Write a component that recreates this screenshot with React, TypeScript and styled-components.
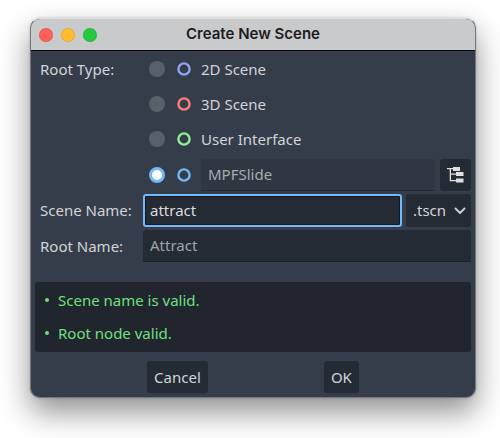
import React, { useState } from "react";
import styled, { createGlobalStyle } from "styled-components";

const GlobalStyle = createGlobalStyle`
  *, *::before, *::after { box-sizing: border-box; }
  body {
    margin: 0;
    background: #ffffff;
    font-family: "Noto Sans", sans-serif;
    font-size: 15px;
    line-height: 24px;
    color: #d2d4d7;
  }
  button, input, select { font: inherit; color: inherit; margin: 0; }
`;

const Desktop = styled.div`
  padding: 18px 24px 40px 30px;
  overflow: hidden;
`;

const Dialog = styled.main`
  border-radius: 10px;
  overflow: hidden;
  background: #363d4a;
  border: 1px solid #727781;
  border-top-color: #dededf;
  box-shadow: 0 14px 30px rgba(0, 0, 0, 0.44), 0 0 3px rgba(0, 0, 0, 0.18);
`;

const TitleBar = styled.header`
  display: grid;
  grid-template-columns: 1fr auto 1fr;
  align-items: center;
  height: 32px;
  padding: 0 8px;
  background: #c9cacc;
  border-bottom: 1px solid #08090b;
`;

const Lights = styled.div`
  display: flex;
  gap: 8px;
`;

const Light = styled.button<{ $color: string }>`
  width: 14px;
  height: 14px;
  padding: 0;
  border: 1px solid rgba(0, 0, 0, 0.08);
  border-radius: 50%;
  background: ${(p) => p.$color};
`;

const Title = styled.h1`
  margin: 0;
  padding-bottom: 2px;
  font: 600 15px/24px Inter, sans-serif;
  color: #1d1d1f;
`;

const Body = styled.form`
  padding: 3px 4px 4px;
`;

const Fields = styled.div`
  display: grid;
  grid-template-columns: 105px minmax(0, 1fr);
  column-gap: 3px;
  row-gap: 3px;
`;

const FieldLabel = styled.label`
  padding-left: 5px;
  line-height: 32px;
  white-space: nowrap;
`;

const GroupLabel = styled.span`
  padding-left: 5px;
  line-height: 30px;
  white-space: nowrap;
`;

const RadioList = styled.div`
  display: grid;
  gap: 4px;
`;

const RadioRow = styled.div<{ $withField?: boolean }>`
  display: flex;
  align-items: center;
  min-height: 31px;
  padding-left: 6px;
  padding-bottom: ${(p) => (p.$withField ? 0 : 2)}px;
`;

const Radio = styled.input`
  appearance: none;
  flex: none;
  width: 16px;
  height: 16px;
  margin-right: 12px;
  border-radius: 50%;
  background: #5a6069;
  &:checked {
    background: #ffffff;
    border: 3px solid #70bafa;
  }
`;

const OptionLabel = styled.label`
  display: flex;
  align-items: center;
  gap: 10px;
  margin-right: 10px;
`;

const RingIcon = styled.svg`
  flex: none;
  width: 14px;
  height: 14px;
`;

const TextField = styled.input<{ $muted?: boolean }>`
  flex: 1;
  width: 100%;
  min-width: 0;
  height: 32px;
  padding: 0 7px 1px;
  border: 0;
  border-bottom: 1px solid ${(p) => (p.$muted ? "#252b34" : "#1b2027")};
  border-radius: 3px 3px 0 0;
  outline: none;
  background: ${(p) => (p.$muted ? "#303642" : "#252b34")};
  color: ${(p) => (p.$muted ? "#a7abb1" : "#dadbdd")};
  &::placeholder { color: #a0a3a8; opacity: 1; }
`;

const ActiveField = styled(TextField)`
  height: 33px;
  padding: 0 5px 2px;
  border: 2px solid #70bafa;
  border-radius: 3px;
  box-shadow: inset 0 0 0 1px #15191f;
`;

const NameRow = styled.div`
  display: flex;
  gap: 4px;
`;

const Button = styled.button`
  display: flex;
  align-items: center;
  justify-content: center;
  height: 32px;
  padding: 0 7px 1px;
  border: 0;
  border-radius: 3px;
  background: #252b34;
`;

const TreeButton = styled(Button)`
  flex: none;
  width: 31px;
  margin-left: 5px;
`;

const SelectBox = styled.div`
  display: grid;
  flex: none;
  width: 65px;
  height: 33px;
  border-radius: 3px;
  background: #252b34;
  > * { grid-area: 1 / 1; }
`;

const Select = styled.select`
  appearance: none;
  width: 100%;
  padding: 0 7px 1px;
  border: 0;
  outline: none;
  background: transparent;
`;

const Chevron = styled.svg`
  align-self: center;
  justify-self: end;
  width: 12px;
  height: 8px;
  margin-right: 5px;
  pointer-events: none;
`;

const Messages = styled.ul`
  list-style: none;
  margin: 20px 0 9px;
  padding: 1px 10px 3px;
  border-radius: 3px;
  background: #21262e;
  color: #6fe07f;
`;

const Message = styled.li`
  display: flex;
  align-items: center;
  gap: 9px;
  height: 33px;
  &::before {
    content: "";
    width: 4px;
    height: 4px;
    border-radius: 50%;
    background: currentColor;
  }
`;

const Actions = styled.footer`
  display: flex;
  justify-content: space-evenly;
  gap: 4px;
`;

const Ring = ({ color }: { color: string }) => (
  <RingIcon viewBox="0 0 14 14" aria-hidden="true">
    <circle cx="7" cy="7" r="5.600" fill="none" stroke={color} strokeWidth="2.400" />
  </RingIcon>
);

const TreeIcon = () => (
  <svg width="17" height="16" viewBox="0 0 17 16" fill="#e0e0e0" aria-hidden="true">
    <path d="M0 1h6V0h7v4H6V2.300H4V6.500h5V5h7.500v4H9V7.800H4V13h5v-1.500h7.500v4H9v-1.200H2.700v-12H0z" />
  </svg>
);

const rootTypes = [
  { id: "2d", label: "2D Scene", color: "#8da5f3" },
  { id: "3d", label: "3D Scene", color: "#fc7f7f" },
  { id: "ui", label: "User Interface", color: "#8eef97" },
];

export default function App() {
  const [rootType, setRootType] = useState("custom");
  const [sceneName, setSceneName] = useState("attract");
  const [rootName, setRootName] = useState("");

  return (
    <>
      <GlobalStyle />
      <Desktop>
        <Dialog>
          <TitleBar>
            <Lights>
              <Light $color="#ff6057" aria-label="Close" />
              <Light $color="#febc2e" aria-label="Minimize" />
              <Light $color="#28c840" aria-label="Zoom" />
            </Lights>
            <Title>Create New Scene</Title>
          </TitleBar>
          <Body onSubmit={(e) => e.preventDefault()}>
            <Fields>
              <GroupLabel id="root-type">Root Type:</GroupLabel>
              <RadioList role="radiogroup" aria-labelledby="root-type">
                {rootTypes.map((t) => (
                  <RadioRow key={t.id}>
                    <Radio
                      type="radio"
                      name="root-type"
                      id={t.id}
                      checked={rootType === t.id}
                      onChange={() => setRootType(t.id)}
                    />
                    <OptionLabel htmlFor={t.id}>
                      <Ring color={t.color} />
                      {t.label}
                    </OptionLabel>
                  </RadioRow>
                ))}
                <RadioRow $withField>
                  <Radio
                    type="radio"
                    name="root-type"
                    id="custom"
                    aria-label="Other node"
                    checked={rootType === "custom"}
                    onChange={() => setRootType("custom")}
                  />
                  <OptionLabel htmlFor="custom">
                    <Ring color="#70bafa" />
                  </OptionLabel>
                  <TextField $muted readOnly value="MPFSlide" aria-label="Node type" />
                  <TreeButton type="button" aria-label="Pick node type">
                    <TreeIcon />
                  </TreeButton>
                </RadioRow>
              </RadioList>

              <FieldLabel htmlFor="scene-name">Scene Name:</FieldLabel>
              <NameRow>
                <ActiveField
                  id="scene-name"
                  value={sceneName}
                  onChange={(e) => setSceneName(e.target.value)}
                />
                <SelectBox>
                  <Select aria-label="Scene extension" defaultValue=".tscn">
                    <option>.tscn</option>
                    <option>.scn</option>
                  </Select>
                  <Chevron viewBox="0 0 12 8" aria-hidden="true">
                    <path
                      d="M1.500 1.500 6 6l4.500-4.500"
                      fill="none"
                      stroke="#c8cacc"
                      strokeWidth="2"
                      strokeLinecap="round"
                      strokeLinejoin="round"
                    />
                  </Chevron>
                </SelectBox>
              </NameRow>

              <FieldLabel htmlFor="root-name">Root Name:</FieldLabel>
              <TextField
                id="root-name"
                placeholder="Attract"
                value={rootName}
                onChange={(e) => setRootName(e.target.value)}
              />
            </Fields>

            <Messages>
              <Message>Scene name is valid.</Message>
              <Message>Root node valid.</Message>
            </Messages>

            <Actions>
              <Button type="button">Cancel</Button>
              <Button type="submit">OK</Button>
            </Actions>
          </Body>
        </Dialog>
      </Desktop>
    </>
  );
}
